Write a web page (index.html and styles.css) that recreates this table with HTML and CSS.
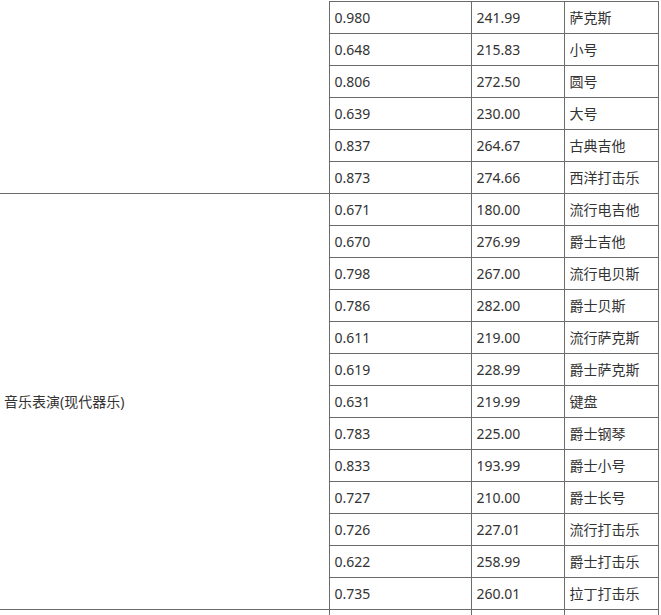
FILE: index.html
```html
<!DOCTYPE html>
<html lang="zh">
<head>
<meta charset="utf-8">
<title>表格</title>
<link rel="stylesheet" href="styles.css">
</head>
<body>
<table class="data">
  <colgroup>
    <col class="c1"><col class="c2"><col class="c3"><col class="c4">
  </colgroup>
  <tbody>
    <tr><td class="group top" rowspan="6"></td><td>0.980</td><td>241.99</td><td>萨克斯</td></tr>
    <tr><td>0.648</td><td>215.83</td><td>小号</td></tr>
    <tr><td>0.806</td><td>272.50</td><td>圆号</td></tr>
    <tr><td>0.639</td><td>230.00</td><td>大号</td></tr>
    <tr><td>0.837</td><td>264.67</td><td>古典吉他</td></tr>
    <tr><td>0.873</td><td>274.66</td><td>西洋打击乐</td></tr>
    <tr><td class="group" rowspan="13">音乐表演(现代器乐)</td><td>0.671</td><td>180.00</td><td>流行电吉他</td></tr>
    <tr><td>0.670</td><td>276.99</td><td>爵士吉他</td></tr>
    <tr><td>0.798</td><td>267.00</td><td>流行电贝斯</td></tr>
    <tr><td>0.786</td><td>282.00</td><td>爵士贝斯</td></tr>
    <tr><td>0.611</td><td>219.00</td><td>流行萨克斯</td></tr>
    <tr><td>0.619</td><td>228.99</td><td>爵士萨克斯</td></tr>
    <tr><td>0.631</td><td>219.99</td><td>键盘</td></tr>
    <tr><td>0.783</td><td>225.00</td><td>爵士钢琴</td></tr>
    <tr><td>0.833</td><td>193.99</td><td>爵士小号</td></tr>
    <tr><td>0.727</td><td>210.00</td><td>爵士长号</td></tr>
    <tr><td>0.726</td><td>227.01</td><td>流行打击乐</td></tr>
    <tr><td>0.622</td><td>258.99</td><td>爵士打击乐</td></tr>
    <tr><td>0.735</td><td>260.01</td><td>拉丁打击乐</td></tr>
    <tr><td class="group"></td><td></td><td></td><td></td></tr>
  </tbody>
</table>
</body>
</html>
```

FILE: styles.css
```css
html, body {
  margin: 0;
  padding: 0;
  background: #ffffff;
}

body {
  font-family: "Noto Sans", "Noto Sans CJK SC", sans-serif;
  font-size: 14px;
  color: #333333;
}

.data {
  border-collapse: collapse;
  table-layout: fixed;
  width: 658px;
  margin-top: 1px;
}

.c1 { width: 329px; }
.c2 { width: 142px; }
.c3 { width: 93px; }
.c4 { width: 94px; }

.data td {
  border: 1px solid #6b6b6b;
  height: 32px;
  padding: 0 5px;
  box-sizing: border-box;
  vertical-align: middle;
  line-height: 20px;
  white-space: nowrap;
}

.data td.group {
  border-left: none;
  padding-left: 4px;
}

.data td.top {
  border-top: none;
}
```
